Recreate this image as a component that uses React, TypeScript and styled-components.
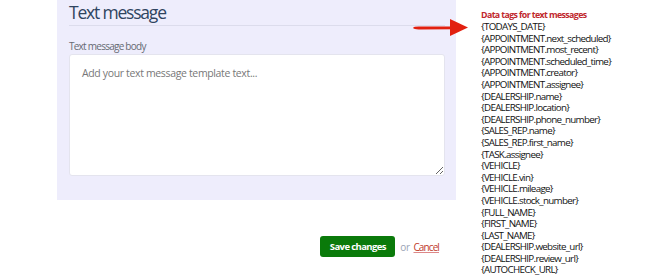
import styled, { createGlobalStyle } from "styled-components";

const GlobalStyle = createGlobalStyle`
  body {
    margin: 0;
    background: #fff;
    font-family: "Open Sans", "Noto Sans", sans-serif;
  }
`;

const Page = styled.div`
  display: flex;
  align-items: flex-start;
  width: 670px;
  height: 280px;
  overflow: hidden;
`;

const Main = styled.div`
  margin-left: 57px;
  width: 399px;
  display: flex;
  flex-direction: column;
`;

const Panel = styled.section`
  position: relative;
  background: #eeedfc;
  height: 200px;
  box-sizing: border-box;
  padding: 0 11px 0 12px;
`;

const Heading = styled.h2`
  margin: 0;
  padding: 0 0 1px;
  font-size: 17.5px;
  letter-spacing: -1.2px;
  font-weight: 400;
  line-height: 24px;
  color: #2f4460;
  border-bottom: 1px solid #dcdcec;
`;

const Label = styled.label`
  display: block;
  margin-top: 14px;
  font-size: 10px;
  letter-spacing: -0.75px;
  line-height: 12px;
  color: #666a73;
`;

const Body = styled.textarea`
  display: block;
  box-sizing: border-box;
  width: 376px;
  height: 122px;
  margin-top: 2px;
  border: 1px solid #e4e4ee;
  border-radius: 3px;
  padding: 11px 12px;
  font-family: inherit;
  font-size: 10.5px;
  letter-spacing: -0.35px;
  color: #333;
  resize: vertical;
  &::placeholder {
    color: #777;
  }
`;

const Arrow = styled.svg`
  position: absolute;
  left: 353px;
  top: 18px;
`;

const Actions = styled.div`
  display: flex;
  align-items: center;
  justify-content: flex-end;
  gap: 4px;
  margin-top: 36px;
  padding-right: 17px;
`;

const SaveButton = styled.button`
  background: #0a7a0a;
  color: #fff;
  border: none;
  border-radius: 3px;
  height: 21px;
  width: 75px;
  margin-right: 1px;
  padding: 0;
  font-family: inherit;
  font-size: 9.5px;
  letter-spacing: -0.6px;
  font-weight: 700;
`;

const Or = styled.span`
  font-size: 10px;
  letter-spacing: -0.5px;
  color: #9aa3b5;
`;

const CancelLink = styled.a`
  font-size: 10px;
  letter-spacing: -0.9px;
  color: #c0392b;
  text-decoration: underline;
  text-decoration-color: #d88;
`;

const Tags = styled.aside`
  margin-left: 25px;
  padding-top: 10px;
`;

const TagsTitle = styled.div`
  font-size: 8.8px;
  letter-spacing: -0.6px;
  font-weight: 700;
  line-height: 11px;
  color: #c0282d;
`;

const TagList = styled.ul`
  list-style: none;
  margin: 0;
  padding: 0;
`;

const Tag = styled.li`
  font-size: 9.8px;
  letter-spacing: -0.7px;
  line-height: 11.6px;
  color: #111;
  white-space: nowrap;
`;

const tags = [
  "TODAYS_DATE",
  "APPOINTMENT.next_scheduled",
  "APPOINTMENT.most_recent",
  "APPOINTMENT.scheduled_time",
  "APPOINTMENT.creator",
  "APPOINTMENT.assignee",
  "DEALERSHIP.name",
  "DEALERSHIP.location",
  "DEALERSHIP.phone_number",
  "SALES_REP.name",
  "SALES_REP.first_name",
  "TASK.assignee",
  "VEHICLE",
  "VEHICLE.vin",
  "VEHICLE.mileage",
  "VEHICLE.stock_number",
  "FULL_NAME",
  "FIRST_NAME",
  "LAST_NAME",
  "DEALERSHIP.website_url",
  "DEALERSHIP.review_url",
  "AUTOCHECK_URL",
];

export default function App() {
  return (
    <>
      <GlobalStyle />
      <Page>
        <Main>
          <Panel>
            <Heading>Text message</Heading>
            <Label htmlFor="sms-body">Text message body</Label>
            <Body id="sms-body" placeholder="Add your text message template text..." />
            <Arrow width="60" height="20" viewBox="0 0 60 20">
              <path d="M3 10 Q4 8.4 10 8.6 L43 8.4 L43 11.2 L10 11.4 Q4 11.6 3 10 Z" fill="#e2200f" />
              <polygon points="40,1 58,9.5 40,18" fill="#e2200f" />
            </Arrow>
          </Panel>
          <Actions>
            <SaveButton>Save changes</SaveButton>
            <Or>or</Or>
            <CancelLink href="#">Cancel</CancelLink>
          </Actions>
        </Main>
        <Tags>
          <TagsTitle>Data tags for text messages</TagsTitle>
          <TagList>
            {tags.map((t) => (
              <Tag key={t}>{`{${t}}`}</Tag>
            ))}
          </TagList>
        </Tags>
      </Page>
    </>
  );
}
